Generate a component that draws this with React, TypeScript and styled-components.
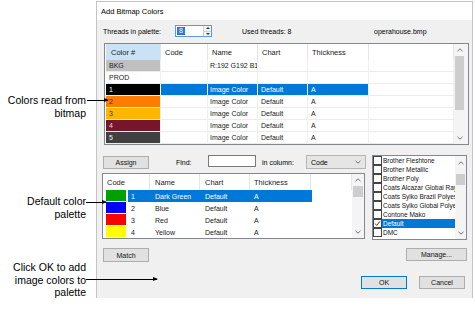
import styled, { createGlobalStyle } from "styled-components";

const GlobalStyle = createGlobalStyle`
  html, body {
    margin: 0;
    padding: 0;
    background: #ffffff;
  }
  body {
    font-family: "Liberation Sans", Arial, sans-serif;
    color: #000;
  }
  * {
    box-sizing: border-box;
  }
`;

const Page = styled.div`
  position: relative;
  width: 475px;
  height: 312px;
  padding: 1px 0 0 96px;
  overflow: hidden;
`;

const Dialog = styled.div`
  width: 377px;
  border: 1px solid #c4c4c4;
  border-bottom: none;
  background: #f0f0f0;
`;

const TitleBar = styled.div`
  display: flex;
  align-items: center;
  height: 18px;
  padding-left: 4px;
  background: #ffffff;
  font-size: 7.5px;
`;

const Body = styled.div`
  padding: 5px 3px 9px 5px;
  font-size: 7px;
`;

const TopBar = styled.div`
  display: flex;
  align-items: center;
  height: 12px;
  padding-left: 1px;
`;

const Label = styled.span<{ $w?: number; $pl?: number }>`
  display: inline-block;
  flex: none;
  width: ${(p) => (p.$w ? `${p.$w}px` : "auto")};
  padding-left: ${(p) => p.$pl ?? 0}px;
  white-space: nowrap;
  font-size: 7px;
`;

const Spin = styled.div`
  display: flex;
  width: 37px;
  height: 12px;
  border: 1px solid #5c9bd6;
  background: #fff;
`;

const SpinValue = styled.div`
  flex: 1;
  display: flex;
  align-items: center;
  padding-left: 1px;
  & > span {
    background: #3078d7;
    color: #fff;
    padding: 0 2px;
    line-height: 8px;
  }
`;

const SpinButtons = styled.div`
  width: 8px;
  display: flex;
  flex-direction: column;
  border-left: 1px solid #d0d0d0;
  background: #f3f3f3;
`;

const SpinHalf = styled.div<{ $down?: boolean }>`
  flex: 1;
  display: flex;
  align-items: center;
  justify-content: center;
  border-top: ${(p) => (p.$down ? "1px solid #d0d0d0" : "none")};
  &::before {
    content: "";
    border-left: 2px solid transparent;
    border-right: 2px solid transparent;
    ${(p) =>
      p.$down ? "border-top: 2px solid #333;" : "border-bottom: 2px solid #333;"}
  }
`;

const ListBox = styled.div<{ $h: number; $w?: number; $ml?: number }>`
  display: flex;
  width: ${(p) => (p.$w ? `${p.$w}px` : "auto")};
  height: ${(p) => p.$h}px;
  margin-left: ${(p) => p.$ml ?? 0}px;
  border: 1px solid #828790;
  background: #fff;
`;

const ListContent = styled.div<{ $pl?: number }>`
  flex: 1;
  min-width: 0;
  padding-left: ${(p) => p.$pl ?? 0}px;
  overflow: hidden;
`;

const GridRow = styled.div<{ $cols: string; $h: number }>`
  display: grid;
  grid-template-columns: ${(p) => p.$cols};
  height: ${(p) => p.$h}px;
`;

const HeadCell = styled.div<{ $active?: boolean; $pl?: number }>`
  display: flex;
  align-items: center;
  padding-left: ${(p) => p.$pl ?? 4}px;
  border-right: 1px solid #e5e5e5;
  background: ${(p) => (p.$active ? "#c9e2f6" : "#fff")};
  font-size: 7.5px;
  color: #1a1a1a;
  white-space: nowrap;
  overflow: hidden;
`;

const Cell = styled.div<{ $bg?: string; $fg?: string; $pl?: number; $lines?: boolean }>`
  display: flex;
  align-items: center;
  padding-left: ${(p) => p.$pl ?? 3}px;
  background: ${(p) => p.$bg ?? "transparent"};
  color: ${(p) => p.$fg ?? "#1a1a1a"};
  border-right: ${(p) => (p.$lines ? "1px solid #f0f0f0" : "none")};
  border-bottom: ${(p) => (p.$lines ? "1px solid #ececec" : "none")};
  font-size: 7px;
  line-height: 11px;
  white-space: nowrap;
  overflow: hidden;
`;

const SwatchCell = styled.div`
  padding: 0 2px 1px 3px;
`;

const Swatch = styled.div<{ $bg: string }>`
  height: 100%;
  background: ${(p) => p.$bg};
`;

const Scrollbar = styled.div<{ $w: number; $pr?: number }>`
  display: flex;
  flex-direction: column;
  width: ${(p) => p.$w}px;
  padding-right: ${(p) => p.$pr ?? 0}px;
  background: #f4f4f4;
`;

const ScrollBtn = styled.div<{ $h?: number }>`
  display: flex;
  align-items: center;
  justify-content: center;
  height: ${(p) => p.$h ?? 12}px;
  flex: none;
`;

const Thumb = styled.div<{ $top: number; $h: number }>`
  margin: ${(p) => p.$top}px 1px 0 1px;
  height: ${(p) => p.$h}px;
  background: #cdcdcd;
  flex: none;
`;

const Spacer = styled.div`
  flex: 1;
`;

const Lower = styled.div`
  display: grid;
  grid-template-columns: 263px 95px;
  column-gap: 7px;
  margin-top: 10px;
`;

const Column = styled.div<{ $end?: boolean }>`
  display: flex;
  flex-direction: column;
  align-items: ${(p) => (p.$end ? "flex-end" : "stretch")};
`;

const FindRow = styled.div`
  display: flex;
  align-items: center;
  height: 14px;
  margin-bottom: 4px;
`;

const Button = styled.div<{ $w: number; $h?: number; $default?: boolean; $ml?: number; $mt?: number }>`
  display: flex;
  align-items: center;
  justify-content: center;
  width: ${(p) => p.$w}px;
  height: ${(p) => p.$h ?? 13}px;
  margin-left: ${(p) => p.$ml ?? 0}px;
  margin-top: ${(p) => p.$mt ?? 0}px;
  background: #e1e1e1;
  border: 1px solid ${(p) => (p.$default ? "#0078d7" : "#adadad")};
  font-size: 7px;
  color: #111;
  flex: none;
`;

const TextInput = styled.div`
  width: 48px;
  height: 12px;
  align-self: flex-start;
  border: 1px solid #7a7a7a;
  background: #fff;
  flex: none;
`;

const Dropdown = styled.div`
  display: flex;
  align-items: center;
  justify-content: space-between;
  width: 60px;
  height: 14px;
  padding: 0 4px 0 4px;
  background: #e5e5e5;
  border: 1px solid #b5b5b5;
  font-size: 7px;
  flex: none;
`;

const ChartItem = styled.div`
  display: flex;
  align-items: center;
  height: 9px;
`;

const Check = styled.div`
  display: flex;
  align-items: center;
  justify-content: center;
  width: 9px;
  height: 9px;
  border: 1px solid #444;
  background: #fff;
  flex: none;
`;

const ChartName = styled.div<{ $selected?: boolean }>`
  flex: 1;
  height: 9px;
  padding-left: 1px;
  font-size: 6.5px;
  line-height: 9px;
  white-space: nowrap;
  overflow: hidden;
  background: ${(p) => (p.$selected ? "#0078d7" : "transparent")};
  color: ${(p) => (p.$selected ? "#fff" : "#111")};
`;

const Footer = styled.div`
  display: flex;
  justify-content: flex-end;
  gap: 12px;
  margin-top: 14px;
  padding-right: 4px;
`;

const Callout = styled.div<{ $top: number }>`
  position: absolute;
  left: 0;
  top: ${(p) => p.$top}px;
  width: 86px;
  text-align: right;
  font-size: 10.5px;
  line-height: 12.5px;
  color: #000;
  white-space: nowrap;
`;

const Arrow = styled.div<{ $x: number; $y: number; $len: number }>`
  position: absolute;
  left: ${(p) => p.$x}px;
  top: ${(p) => p.$y}px;
  width: ${(p) => p.$len}px;
  height: 1px;
  background: #000;
  &::after {
    content: "";
    position: absolute;
    right: -1px;
    top: -2px;
    border-top: 2.5px solid transparent;
    border-bottom: 2.5px solid transparent;
    border-left: 5px solid #000;
  }
`;

function Chevron({ down }: { down?: boolean }) {
  return (
    <svg width="6" height="4" viewBox="0 0 6 4">
      <polyline
        points={down ? "0.5,0.8 3,3.2 5.5,0.8" : "0.5,3.2 3,0.8 5.5,3.2"}
        fill="none"
        stroke="#707070"
        strokeWidth="1"
      />
    </svg>
  );
}

type TopRow = {
  code: string;
  bg: string;
  fg: string;
  name?: string;
  chart?: string;
  thick?: string;
  selected?: boolean;
};

const topRows: TopRow[] = [
  { code: "BKG", bg: "#c0c0c0", fg: "#222", name: "R:192 G192 B192" },
  { code: "PROD", bg: "#ffffff", fg: "#222" },
  { code: "1", bg: "#000000", fg: "#ffffff", name: "Image Color", chart: "Default", thick: "A", selected: true },
  { code: "2", bg: "#ff7c00", fg: "#4a2500", name: "Image Color", chart: "Default", thick: "A" },
  { code: "3", bg: "#ffb600", fg: "#4a3300", name: "Image Color", chart: "Default", thick: "A" },
  { code: "4", bg: "#77152c", fg: "#f0d0d8", name: "Image Color", chart: "Default", thick: "A" },
  { code: "5", bg: "#404040", fg: "#f0f0f0", name: "Image Color", chart: "Default", thick: "A" },
];

const paletteRows = [
  { n: "1", color: "#00a000", name: "Dark Green", selected: true },
  { n: "2", color: "#0000ff", name: "Blue" },
  { n: "3", color: "#ff0000", name: "Red" },
  { n: "4", color: "#ffff00", name: "Yellow" },
];

const charts = [
  "Brother Fleshtone",
  "Brother Metallic",
  "Brother Poly",
  "Coats Alcazar Global Rayon",
  "Coats Sylko Brazil Polyester",
  "Coats Sylko Global Polyester",
  "Contone Mako",
  "Default",
  "DMC",
];

const TOP_COLS = "55px 47px 50px 50px 61px 1fr";
const PAL_HEAD = "47px 50px 50px 61px 1fr";
const PAL_ROW = "25px 22px 50px 50px 62px 1fr";

export default function App() {
  const blue = "#0078d7";
  return (
    <Page>
      <GlobalStyle />
      <Dialog>
        <TitleBar>Add Bitmap Colors</TitleBar>
        <Body>
          <TopBar>
            <Label $w={72}>Threads in palette:</Label>
            <Spin>
              <SpinValue>
                <span>8</span>
              </SpinValue>
              <SpinButtons>
                <SpinHalf />
                <SpinHalf $down />
              </SpinButtons>
            </Spin>
            <Label $w={162} $pl={30}>Used threads: 8</Label>
            <Label>operahouse.bmp</Label>
          </TopBar>

          <ListBox $h={102} $ml={2} style={{ marginTop: 6 }}>
            <ListContent $pl={1}>
              <GridRow $cols={TOP_COLS} $h={16}>
                <HeadCell $active $pl={5}>Color #</HeadCell>
                <HeadCell>Code</HeadCell>
                <HeadCell>Name</HeadCell>
                <HeadCell>Chart</HeadCell>
                <HeadCell>Thickness</HeadCell>
                <HeadCell />
              </GridRow>
              {topRows.map((r) => {
                const bg = r.selected ? blue : undefined;
                const fg = r.selected ? "#fff" : undefined;
                return (
                  <GridRow key={r.code} $cols={TOP_COLS} $h={12}>
                    <Cell $bg={r.bg} $fg={r.fg} $lines>{r.code}</Cell>
                    <Cell $bg={bg} $fg={fg} $lines />
                    <Cell $bg={bg} $fg={fg} $lines $pl={2}>{r.name}</Cell>
                    <Cell $bg={bg} $fg={fg} $lines>{r.chart}</Cell>
                    <Cell $bg={bg} $fg={fg} $lines>{r.thick}</Cell>
                    <Cell $lines />
                  </GridRow>
                );
              })}
            </ListContent>
            <Scrollbar $w={14} $pr={3}>
              <ScrollBtn>
                <Chevron />
              </ScrollBtn>
              <Thumb $top={0} $h={54} />
              <Spacer />
              <ScrollBtn>
                <Chevron down />
              </ScrollBtn>
            </Scrollbar>
          </ListBox>

          <Lower>
            <Column>
              <FindRow>
                <Button $w={46} $ml={1}>Assign</Button>
                <Label $w={59} $pl={27}>Find:</Label>
                <TextInput />
                <Label $w={50} $pl={6}>in column:</Label>
                <Dropdown>
                  <span>Code</span>
                  <Chevron down />
                </Dropdown>
              </FindRow>

              <ListBox $h={66}>
                <ListContent>
                  <GridRow $cols={PAL_HEAD} $h={16}>
                    <HeadCell>Code</HeadCell>
                    <HeadCell $pl={5}>Name</HeadCell>
                    <HeadCell $pl={5}>Chart</HeadCell>
                    <HeadCell>Thickness</HeadCell>
                    <HeadCell />
                  </GridRow>
                  {paletteRows.map((r) => {
                    const bg = r.selected ? blue : undefined;
                    const fg = r.selected ? "#fff" : undefined;
                    return (
                      <GridRow key={r.n} $cols={PAL_ROW} $h={12}>
                        <SwatchCell>
                          <Swatch $bg={r.color} />
                        </SwatchCell>
                        <Cell $bg={bg} $fg={fg}>{r.n}</Cell>
                        <Cell $bg={bg} $fg={fg} $pl={5}>{r.name}</Cell>
                        <Cell $bg={bg} $fg={fg} $pl={5}>Default</Cell>
                        <Cell $bg={bg} $fg={fg} $pl={4}>A</Cell>
                        <Cell />
                      </GridRow>
                    );
                  })}
                </ListContent>
                <Scrollbar $w={12}>
                  <ScrollBtn>
                    <Chevron />
                  </ScrollBtn>
                  <Thumb $top={0} $h={11} />
                  <Spacer />
                  <ScrollBtn>
                    <Chevron down />
                  </ScrollBtn>
                </Scrollbar>
              </ListBox>

              <Button $w={46} $h={14} $ml={1} $mt={9}>Match</Button>
            </Column>

            <Column $end>
              <ListBox $h={85} $w={95}>
                <ListContent>
                  {charts.map((c) => (
                    <ChartItem key={c}>
                      <Check>
                        {c === "Default" && (
                          <svg width="7" height="7" viewBox="0 0 7 7">
                            <polyline points="1,3.5 2.8,5.5 6,1.2" fill="none" stroke="#333" strokeWidth="0.9" />
                          </svg>
                        )}
                      </Check>
                      <ChartName $selected={c === "Default"}>{c}</ChartName>
                    </ChartItem>
                  ))}
                </ListContent>
                <Scrollbar $w={11}>
                  <ScrollBtn $h={14}>
                    <Chevron />
                  </ScrollBtn>
                  <Thumb $top={4} $h={11} />
                  <Spacer />
                  <ScrollBtn>
                    <Chevron down />
                  </ScrollBtn>
                </Scrollbar>
              </ListBox>
              <Button $w={61} $mt={8}>Manage...</Button>
            </Column>
          </Lower>

          <Footer>
            <Button $w={46} $default>OK</Button>
            <Button $w={46}>Cancel</Button>
          </Footer>
        </Body>
      </Dialog>

      <Callout $top={94}>
        Colors read from
        <br />
        bitmap
      </Callout>
      <Arrow $x={87} $y={100} $len={21} />

      <Callout $top={195}>
        Default color
        <br />
        palette
      </Callout>
      <Arrow $x={86} $y={202} $len={20} />

      <Callout $top={261}>
        Click OK to add
        <br />
        image colors to
        <br />
        palette
      </Callout>
      <Arrow $x={86} $y={279} $len={71} />
    </Page>
  );
}
